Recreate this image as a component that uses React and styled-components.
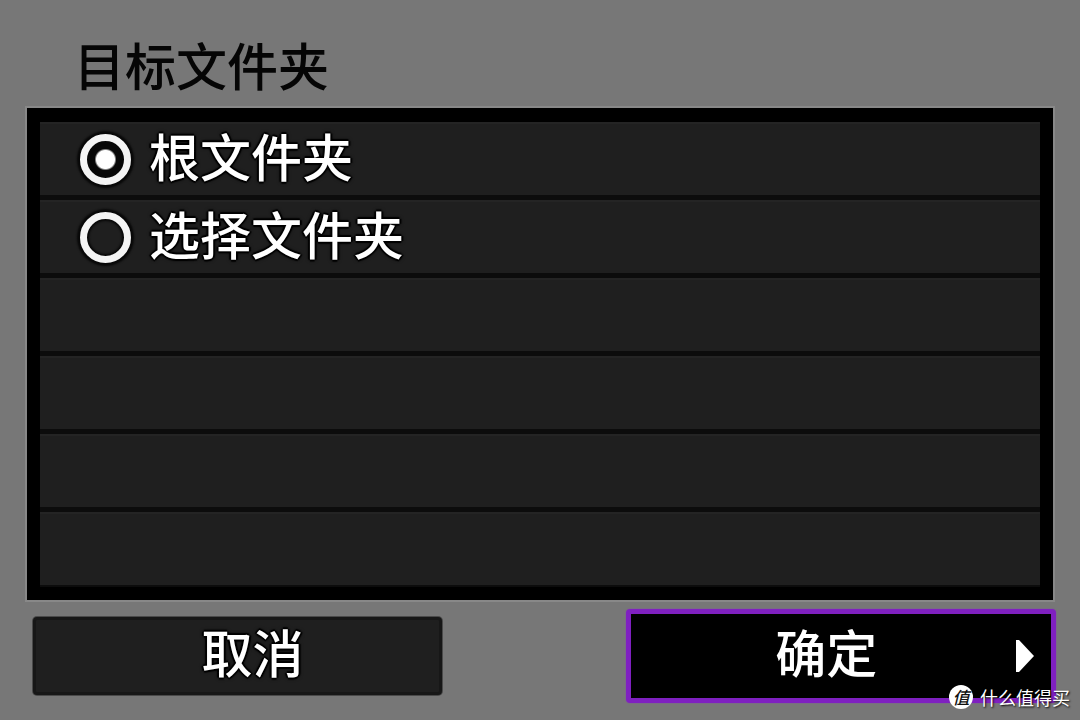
import React, { useState } from 'react';
import styled, { createGlobalStyle, css } from 'styled-components';

const GlobalStyle = createGlobalStyle`
  * {
    box-sizing: border-box;
  }

  body {
    margin: 0;
    background: #777777;
    font-family: "Noto Sans CJK SC", sans-serif;
  }
`

const folders = [
  { id: 'root', label: '根文件夹' },
  { id: 'select', label: '选择文件夹' },
]

const ROW_COUNT = 6

const App = () => {
  const [target, setTarget] = useState('root')
  const emptyRows = Array.from({ length: ROW_COUNT - folders.length })

  return (
    <Screen>
      <GlobalStyle />
      <Title id="title">目标文件夹</Title>
      <List role="radiogroup" aria-labelledby="title">
        {folders.map(({ id, label }) => (
          <Row key={id}>
            <Option htmlFor={id}>
              <Radio
                id={id}
                name="folder"
                checked={target === id}
                onChange={() => setTarget(id)}
              />
              <OptionText>{label}</OptionText>
            </Option>
          </Row>
        ))}
        {emptyRows.map((_, i) => <Row key={i} />)}
      </List>
      <Footer>
        <Button type="button">取消</Button>
        <Button type="button" $active>
          确定
          <Arrow viewBox="0 0 18 32" aria-hidden="true">
            <path d="M0 0 L3 0 L18 16 L3 32 L0 32 Z" />
          </Arrow>
        </Button>
      </Footer>
      <Watermark>
        <Badge>值</Badge>
        什么值得买
      </Watermark>
    </Screen>
  )
}

const outline = css`
  text-shadow: 2px 0 1px #000, -2px 0 1px #000, 0 2px 1px #000, 0 -2px 1px #000,
    0 0 4px #000;
`

const Screen = styled.main`
  min-height: 100vh;
  padding: 24px 27px 12px;
  position: relative;
`

const Title = styled.h1`
  color: #050505;
  font-size: 51px;
  font-weight: 500;
  line-height: 80px;
  margin: 0;
  padding: 0 0 4px 47px;
`

const List = styled.div`
  background: #0c0c0c;
  border: 13px solid #000;
  border-top-width: 14px;
  box-shadow: 0 0 0 2px #888888;
  display: flex;
  flex-direction: column;
  gap: 5px;
  padding-bottom: 2px;
`

const Row = styled.div`
  background: #1f1f1f;
  border-top: 2px solid #242424;
  height: 73px;
`

const Option = styled.label`
  ${outline}
  align-items: center;
  color: #fff;
  display: flex;
  font-size: 51px;
  font-weight: 500;
  gap: 18px;
  height: 71px;
  line-height: 60px;
  padding-left: 40px;
`

const OptionText = styled.span`
  padding-bottom: 10px;
`

const Radio = styled.input.attrs({ type: 'radio' })`
  appearance: none;
  background: #1f1f1f;
  border: 7px solid #f4f4f4;
  border-radius: 50%;
  box-shadow: 0 0 2px 3px #080808, inset 0 0 2px 2px #080808;
  flex: none;
  height: 51px;
  margin: 0;
  width: 51px;

  &:checked {
    background: radial-gradient(circle, #fff 9px, #080808 11px);
  }
`

const Footer = styled.div`
  align-items: center;
  display: flex;
  justify-content: space-between;
  margin: 9px -3px 0 6px;
`

const Button = styled.button`
  ${outline}
  background: ${({ $active }) => ($active ? '#000' : '#1f1f1f')};
  border: ${({ $active }) => ($active ? '5px solid #7f20c0' : '3px solid #171717')};
  border-radius: 4px;
  box-shadow: 0 0 0 1px ${({ $active }) => ($active ? '#7a6b85' : '#4a4a4a')};
  color: #fff;
  font-family: inherit;
  font-size: 51px;
  font-weight: 500;
  height: ${({ $active }) => ($active ? '94px' : '78px')};
  line-height: 60px;
  padding: ${({ $active }) => ($active ? '0 30px 10px 0' : '0 0 10px 30px')};
  position: relative;
  width: ${({ $active }) => ($active ? '42%' : '40%')};
`

const Arrow = styled.svg`
  fill: #fff;
  height: 32px;
  position: absolute;
  right: 17px;
  top: 26px;
  width: 18px;
`

const Watermark = styled.div`
  align-items: center;
  bottom: 11px;
  color: #fff;
  display: flex;
  font-size: 18px;
  gap: 7px;
  line-height: 24px;
  position: absolute;
  right: 10px;
  text-shadow: 1px 1px 2px #000;
`

const Badge = styled.span`
  background: #fff;
  border-radius: 50%;
  color: #111;
  font-size: 17px;
  font-style: italic;
  font-weight: 500;
  height: 24px;
  line-height: 23px;
  text-align: center;
  text-shadow: none;
  width: 24px;
`

export default App
